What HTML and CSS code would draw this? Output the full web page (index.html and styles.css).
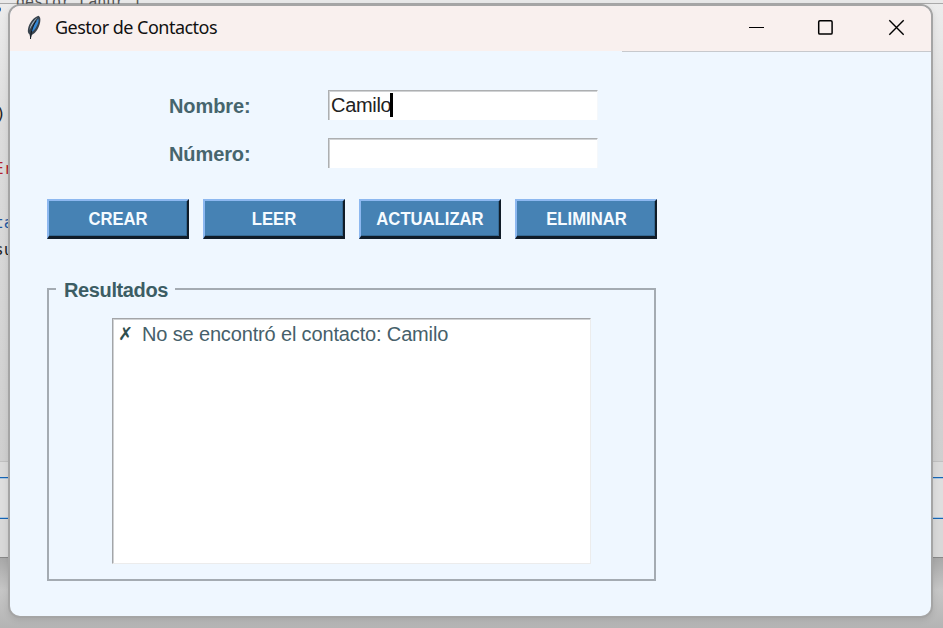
FILE: index.html
```
<!DOCTYPE html>
<html lang="es">
<head>
<meta charset="utf-8">
<title>Gestor de Contactos</title>
<link rel="stylesheet" href="styles.css">
</head>
<body>
<div class="desktop">
  <div class="back-window">
    <div class="back-top"></div>
    <div class="back-editor"></div>
    <div class="back-panel"></div>
    <div class="back-field"></div>
    <div class="back-foot"></div>
  </div>
  <span class="code code-title">gestor.Lanur.l</span>
  <span class="code code-dot"></span>
  <span class="code code-paren">)</span>
  <span class="code code-red">Er</span>
  <span class="code code-blue">ta</span>
  <span class="code code-dark">su</span>

  <main class="window">
    <header class="titlebar">
      <svg class="feather" width="16" height="25" viewBox="0 0 16 25">
        <path d="M12.500.8C8 2 3 8 2 14c-.5 3 0 4 1.500 5.500L4.500 24l1.300-4C10 18 13 13 14.200 7c.5-3 .1-5.200-1.700-6.200z" fill="#39434d"/>
        <path d="M11.500 2.500C8 5 4 10 3.500 15c2-4 5-9 8-12.500z" fill="#a9bccd"/>
        <path d="M12.300 3.500C9 8 6 12 5 17.500c4-2 6.500-7 7.600-11.500z" fill="#3488d6"/>
        <path d="M10 6C7.500 10 5 15 4.500 24" fill="none" stroke="#101820" stroke-width="1"/>
      </svg>
      <h1 class="title">Gestor de Contactos</h1>
      <svg class="controls" width="158" height="18" viewBox="0 0 158 18" fill="none" stroke="#000">
        <path d="M1 9.500h15" stroke-width="1"/>
        <rect x="70.700" y="2.700" width="13.400" height="13.400" rx="1.200" stroke-width="1.500"/>
        <path d="M141.300 2.300l14.400 14.400M155.700 2.300l-14.400 14.400" stroke-width="1.400"/>
      </svg>
    </header>
    <section class="content">
      <div class="form">
        <label class="label" for="nombre">Nombre:</label>
        <div class="entry" id="nombre"><span>Camilo</span><i class="caret"></i></div>
        <label class="label" for="numero">Número:</label>
        <div class="entry" id="numero"></div>
      </div>
      <div class="buttons">
        <button class="button"><span>CREAR</span></button>
        <button class="button"><span>LEER</span></button>
        <button class="button"><span>ACTUALIZAR</span></button>
        <button class="button"><span>ELIMINAR</span></button>
      </div>
      <section class="results">
        <h2 class="legend">Resultados</h2>
        <div class="output"><span class="cross">✗</span><span class="message">No se encontró el contacto: Camilo</span></div>
      </section>
    </section>
  </main>
</div>
</body>
</html>
```
FILE: styles.css
```
* { box-sizing: border-box; }

body {
  margin: 0;
  font-family: "Liberation Sans", Arial, sans-serif;
}

.desktop {
  position: relative;
  width: 943px;
  height: 628px;
  overflow: hidden;
  background: linear-gradient(#a8a8a8 558px, #c6c6c6 590px, #b4b4b4 628px);
}

.back-window { height: 558px; display: flex; flex-direction: column; }
.back-top { height: 4px; background: #e9e9e9; border-bottom: 1px solid #a9a9a9; }
.back-editor { height: 457px; background: linear-gradient(#ececec, #dcdcdc 120px, #cfcfcf); }
.back-panel { height: 16px; background: #dadada; border-top: 1px solid #c0c0c0; }
.back-field {
  height: 42px;
  background: #dedede;
  border: solid #1766b5;
  border-width: 1px 0;
  box-shadow: inset 0 1px #a9c4de, inset 0 -1px #a9c4de;
}
.back-foot { flex: 1; background: #d8d8d8; border-bottom: 1px solid #888; }

.code {
  position: absolute;
  font: 16px/20px "DejaVu Sans Mono", monospace;
  white-space: nowrap;
}
.code-title { left: 16px; top: -8px; color: #555; font-size: 15px; }
.code-dot {
  left: -4px;
  top: 7px;
  width: 5px;
  height: 5px;
  border-radius: 50%;
  background: #1766b5;
}
.code-paren { left: -4px; top: 104px; color: #222; }
.code-red { left: -6px; top: 159px; color: #b3202e; }
.code-blue { left: -6px; top: 213px; color: #1c56a0; }
.code-dark { left: -6px; top: 240px; color: #222; }

.window {
  position: absolute;
  left: 8px;
  top: 4px;
  width: 925px;
  height: 614px;
  border: 2px solid #a5a5a5;
  border-radius: 12px;
  background: #eff7ff;
  overflow: hidden;
  box-shadow: 0 2px 6px rgba(0, 0, 0, .1);
}

.titlebar {
  height: 45px;
  display: flex;
  align-items: flex-start;
  padding: 9px 25px 0 16px;
  background: #f9f0ee;
}
.feather { flex: none; }
.title {
  margin: -1px auto 0 13px;
  font: 400 18px/26px "Noto Sans", sans-serif;
  letter-spacing: -.52px;
  color: #111;
}
.controls { flex: none; margin-top: 3px; }

.content {
  height: 565px;
  padding: 39px 0 0 37px;
  background: linear-gradient(#c7c9cd, #c7c9cd) 100% 0 / 309px 1px no-repeat;
}

.form {
  display: grid;
  grid-template-columns: 159px 270px;
  grid-auto-rows: 30px;
  row-gap: 18px;
  margin-left: 122px;
}
.label {
  font-size: 20px;
  font-weight: 700;
  line-height: 32px;
  letter-spacing: -.1px;
  color: #46656d;
}
.entry {
  display: flex;
  align-items: center;
  padding: 0 0 0 2px;
  background: #fff;
  border: solid #adafb1;
  border-width: 1px 0 0 1px;
  border-right: 1px solid #f5f8fb;
  box-shadow: inset 1px 1px #d0d2d4;
  font-size: 20px;
  letter-spacing: -.3px;
  color: #222;
}
.caret { width: 3px; height: 24px; margin: -2px 0 0 -1px; background: #000; }

.buttons { display: flex; gap: 14px; margin-top: 31px; }
.button {
  width: 142px;
  height: 40px;
  padding: 1px 0 0;
  border: solid;
  border-width: 2px 2px 3px 2px;
  border-color: #8db8f0 #101c28 #101c28 #8db8f0;
  background: #4682b4;
  box-shadow: inset -1px -1px #366a94;
  color: #f6fbff;
  font: 700 18px/24px "Liberation Sans", Arial, sans-serif;
}
.button span { display: inline-block; transform: scaleX(.925); }

.results {
  width: 609px;
  height: 293px;
  margin-top: 49px;
  border: 2px solid #a4abb2;
}
.legend {
  width: 119px;
  margin: -13px 0 0 7px;
  padding-left: 8px;
  background: #eff7ff;
  font-size: 20px;
  line-height: 26px;
  letter-spacing: -.38px;
  color: #3c5d64;
}
.output {
  display: flex;
  width: 479px;
  height: 246px;
  margin: 15px 0 0 63px;
  padding: 2px 0 0 5px;
  border: 1px solid #a3a5a8;
  border-right-color: #ececec;
  border-bottom-color: #ececec;
  box-shadow: inset 1px 1px #d0d2d4;
  background: #fff;
  font-size: 20px;
  line-height: 26px;
  color: #46606a;
}
.cross {
  width: 24px;
  font-family: "DejaVu Sans", sans-serif;
  font-size: 18px;
  color: #2f4f4f;
}
.message { letter-spacing: -.15px; }
```
